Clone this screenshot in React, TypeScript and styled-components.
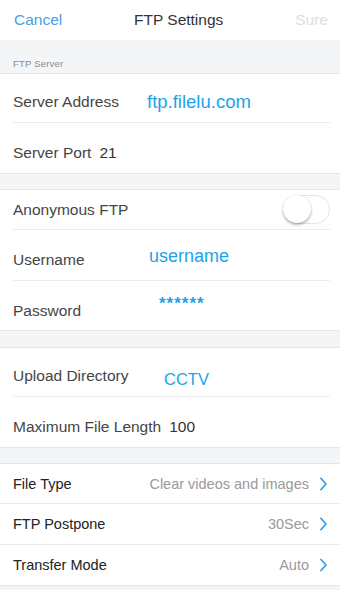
import React from "react";
import styled, { createGlobalStyle } from "styled-components";

const GlobalStyle = createGlobalStyle`
  html, body {
    margin: 0;
    padding: 0;
    background: #f4f5f7;
  }
  body {
    font-family: "Liberation Sans", "Noto Sans", sans-serif;
    -webkit-font-smoothing: antialiased;
  }
`;

const Page = styled.div`
  width: 340px;
  height: 590px;
  overflow: hidden;
  background: #f4f5f7;
  display: flex;
  flex-direction: column;
`;

const NavBar = styled.div`
  height: 40px;
  flex: 0 0 40px;
  background: #fff;
  display: grid;
  grid-template-columns: 120px auto 1fr;
  align-items: center;
  padding: 0 12px 0 14px;
  font-size: 15.5px;
`;

const NavButton = styled.span<{ $disabled?: boolean; $right?: boolean }>`
  color: ${(p) => (p.$disabled ? "#dedede" : "#4a9fe3")};
  justify-self: ${(p) => (p.$right ? "end" : "start")};
`;

const NavTitle = styled.span`
  color: #333;
  font-size: 15.5px;
`;

const GroupHeader = styled.div`
  height: 33px;
  flex: 0 0 33px;
  display: flex;
  align-items: flex-end;
  padding: 0 0 4px 13px;
  box-sizing: border-box;
  font-size: 9.5px;
  color: #8a8a8a;
  letter-spacing: 0.2px;
`;

const Spacer = styled.div<{ $h: number }>`
  height: ${(p) => p.$h}px;
  flex: 0 0 ${(p) => p.$h}px;
`;

const Group = styled.div`
  background: #fff;
  border-top: 1px solid #e6e6e6;
  border-bottom: 1px solid #e6e6e6;
  display: flex;
  flex-direction: column;
`;

const Row = styled.div<{ $h: number; $pt?: number }>`
  height: ${(p) => p.$h}px;
  display: flex;
  align-items: center;
  margin: 0 10px 0 13px;
  padding-top: ${(p) => p.$pt ?? 0}px;
  box-sizing: border-box;
  & + & {
    border-top: 1px solid #ececec;
  }
`;

const MenuRow = styled.div<{ $h: number }>`
  height: ${(p) => p.$h}px;
  display: flex;
  align-items: center;
  padding: 0 12px 0 13px;
  box-sizing: border-box;
  & + & {
    border-top: 1px solid #e8e8e8;
  }
`;

const Label = styled.span<{ $w?: number }>`
  font-size: 15.5px;
  color: #454545;
  flex: ${(p) => (p.$w ? `0 0 ${p.$w}px` : "0 0 auto")};
  white-space: nowrap;
`;

const Field = styled.span<{ $up?: number; $down?: number; $size?: number }>`
  color: #1ba4ea;
  font-size: ${(p) => p.$size ?? 17}px;
  margin-bottom: ${(p) => (p.$up ?? 0) * 2}px;
  margin-top: ${(p) => (p.$down ?? 0) * 2}px;
  white-space: nowrap;
`;

const PlainValue = styled.span`
  font-size: 15.5px;
  color: #333;
  margin-left: 8px;
`;

const Stars = styled.span`
  color: #1ba4ea;
  font-size: 17px;
  font-weight: bold;
  letter-spacing: 1px;
  margin-bottom: 14px;
`;

const Toggle = styled.div`
  margin-left: auto;
  width: 47px;
  height: 29px;
  border-radius: 15px;
  border: 1.5px solid #e4e4e4;
  box-sizing: border-box;
  background: #fff;
  position: relative;
`;

const Knob = styled.div`
  position: absolute;
  left: -1px;
  top: -1px;
  width: 28px;
  height: 28px;
  border-radius: 50%;
  background: #fff;
  box-shadow: 0 2px 3px rgba(0, 0, 0, 0.28), 0 0 1px rgba(0, 0, 0, 0.2);
`;

const MenuLabel = styled.span`
  font-size: 14.5px;
  color: #222;
`;

const MenuValue = styled.span`
  margin-left: auto;
  font-size: 14.5px;
  color: #9a9a9a;
`;

const Chevron = () => (
  <svg width="9" height="14" viewBox="0 0 9 14" style={{ marginLeft: 10 }}>
    <path d="M2 1.5 L7 7 L2 12.5" fill="none" stroke="#3a9be6" strokeWidth="1.8" strokeLinecap="round" strokeLinejoin="round" />
  </svg>
);

const menu = [
  { label: "File Type", value: "Clear videos and images", h: 39 },
  { label: "FTP Postpone", value: "30Sec", h: 41 },
  { label: "Transfer Mode", value: "Auto", h: 41 },
];

export default function App() {
  return (
    <Page>
      <GlobalStyle />
      <NavBar>
        <NavButton>Cancel</NavButton>
        <NavTitle>FTP Settings</NavTitle>
        <NavButton $disabled $right>Sure</NavButton>
      </NavBar>

      <GroupHeader>FTP Server</GroupHeader>
      <Group>
        <Row $h={48} $pt={8}>
          <Label $w={134}>Server Address</Label>
          <Field $size={18.5}>ftp.filelu.com</Field>
        </Row>
        <Row $h={51} $pt={9}>
          <Label>Server Port</Label>
          <PlainValue>21</PlainValue>
        </Row>
      </Group>

      <Spacer $h={15} />
      <Group>
        <Row $h={39}>
          <Label>Anonymous FTP</Label>
          <Toggle>
            <Knob />
          </Toggle>
        </Row>
        <Row $h={51} $pt={10}>
          <Label $w={136}>Username</Label>
          <Field $up={4} $size={18}>username</Field>
        </Row>
        <Row $h={50} $pt={10}>
          <Label $w={146}>Password</Label>
          <Stars>******</Stars>
        </Row>
      </Group>

      <Spacer $h={16} />
      <Group>
        <Row $h={48} $pt={8}>
          <Label $w={151}>Upload Directory</Label>
          <Field $down={3} $size={16.5}>CCTV</Field>
        </Row>
        <Row $h={51} $pt={10}>
          <Label>Maximum File Length</Label>
          <PlainValue>100</PlainValue>
        </Row>
      </Group>

      <Spacer $h={15} />
      <Group>
        {menu.map((m) => (
          <MenuRow key={m.label} $h={m.h}>
            <MenuLabel>{m.label}</MenuLabel>
            <MenuValue>{m.value}</MenuValue>
            <Chevron />
          </MenuRow>
        ))}
      </Group>
    </Page>
  );
}
